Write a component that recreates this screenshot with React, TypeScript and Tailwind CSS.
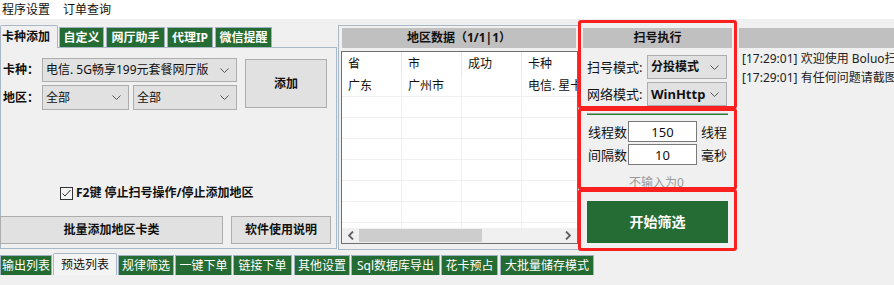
import React from "react";

function Chevron() {
  return (
    <svg width="9" height="5" viewBox="0 0 9 5" className="shrink-0">
      <polyline points="0.5,0.5 4.5,4.5 8.5,0.5" fill="none" stroke="#555" strokeWidth="1" />
    </svg>
  );
}

function Sel({ className, text, bold }: { className: string; text: string; bold?: boolean }) {
  return (
    <div
      className={
        "flex items-center justify-between bg-[#e1e1e1] border border-[#adadad] pl-[3px] pr-[7px] overflow-hidden whitespace-nowrap " +
        className
      }
    >
      <span className={bold ? "font-bold" : ""}>{text}</span>
      <Chevron />
    </div>
  );
}

const topTabs: { label: string; w: string }[] = [
  { label: "自定义", w: "w-[45px]" },
  { label: "网厅助手", w: "w-[59px]" },
  { label: "代理IP", w: "w-[46px]" },
  { label: "微信提醒", w: "w-[57px]" },
];

const bottomTabs: { label: string; cls: string; active?: boolean }[] = [
  { label: "输出列表", cls: "w-[52px]" },
  { label: "预选列表", cls: "w-[64px] ml-[1px]", active: true },
  { label: "规律筛选", cls: "w-[56px] ml-[1px]" },
  { label: "一键下单", cls: "w-[57px] ml-[1px]" },
  { label: "链接下单", cls: "w-[59px] ml-[1px]" },
  { label: "其他设置", cls: "w-[56px] ml-[2px]" },
  { label: "Sql数据库导出", cls: "w-[89px] ml-[1px]" },
  { label: "花卡预占", cls: "w-[57px] ml-[1px]" },
  { label: "大批量储存模式", cls: "w-[94px] ml-[2px]" },
];

function Row({ cells }: { cells: string[] }) {
  return (
    <div className="flex h-[21px] shrink-0 border-b border-[#f0f0f0]">
      <div className="w-[60px] shrink-0 border-r border-[#f0f0f0] pl-[6px] flex items-center">{cells[0]}</div>
      <div className="w-[60px] shrink-0 border-r border-[#f0f0f0] pl-[6px] flex items-center">{cells[1]}</div>
      <div className="w-[60px] shrink-0 border-r border-[#f0f0f0] pl-[6px] flex items-center">{cells[2]}</div>
      <div className="w-[60px] shrink-0 pl-[6px] flex items-center whitespace-nowrap overflow-hidden">{cells[3]}</div>
    </div>
  );
}

export default function App() {
  return (
    <div className="w-[894px] h-[285px] bg-[#f0f0f0] overflow-hidden relative font-['Noto_Sans','Noto_Sans_CJK_SC',sans-serif] text-[12px] leading-[16px] text-[#111]">
      {/* menu */}
      <div className="h-[19px] bg-white flex items-center pl-[2px] gap-[13px]">
        <span>程序设置</span>
        <span>订单查询</span>
      </div>

      <div className="flex h-[234px]">
        {/* left tab control */}
        <div className="w-[337px] shrink-0 flex flex-col pt-[6px]">
          <div className="flex items-end h-[22px]">
            <div className="w-[58px] h-[23px] -mb-px relative z-10 border border-b-0 border-[#a9b8c6] bg-[#f0f0f0] rounded-t-[2px] pl-[1px] flex items-center font-bold">
              卡种添加
            </div>
            <div className="flex gap-[2px] ml-[1px]">
              {topTabs.map((t) => (
                <div
                  key={t.label}
                  className={
                    "h-[20px] bg-[#256b34] border border-[#9fb0bf] border-b-0 text-white font-bold flex items-center justify-center " +
                    t.w
                  }
                >
                  {t.label}
                </div>
              ))}
            </div>
          </div>
          <div className="h-[202px] border border-[#a9b8c6] flex flex-col">
            <div className="flex mt-[10px]">
              <div className="flex flex-col gap-[3px]">
                <div className="flex items-center h-[24px]">
                  <span className="w-[41px] pl-[2px] font-bold">卡种：</span>
                  <Sel className="w-[195px] h-[24px]" text="电信. 5G畅享199元套餐网厅版" />
                </div>
                <div className="flex items-center h-[25px]">
                  <span className="w-[41px] pl-[2px] font-bold">地区：</span>
                  <Sel className="w-[87px] h-[25px]" text="全部" />
                  <Sel className="w-[104px] h-[25px] ml-[4px]" text="全部" />
                </div>
              </div>
              <div className="ml-[8px] mt-[1px] w-[82px] h-[49px] bg-[#e1e1e1] border border-[#adadad] flex items-center justify-center font-bold">
                添加
              </div>
            </div>
            <div className="flex items-center mt-[76px] h-[14px] pl-[59px]">
              <svg width="13" height="13" viewBox="0 0 13 13" className="shrink-0">
                <rect x="0.5" y="0.5" width="12" height="12" fill="#f4f4f4" stroke="#333" />
                <polyline points="2.5,6.5 5,9 10.5,3" fill="none" stroke="#333" strokeWidth="1" />
              </svg>
              <span className="ml-[3px] font-bold whitespace-nowrap">F2键 停止扫号操作/停止添加地区</span>
            </div>
            <div className="flex mt-[16px] -ml-px">
              <div className="w-[223px] h-[28px] bg-[#e1e1e1] border border-[#adadad] flex items-center justify-center font-bold">
                批量添加地区卡类
              </div>
              <div className="w-[100px] ml-[8px] h-[28px] bg-[#e1e1e1] border border-[#adadad] flex items-center justify-center font-bold">
                软件使用说明
              </div>
            </div>
          </div>
        </div>

        {/* middle group */}
        <div className="ml-[1px] mt-[6px] w-[242px] h-[225px] shrink-0 border border-[#a9b8c6] flex flex-col">
          <div className="mt-[2px] mx-[3px] h-[20px] bg-[#c0c0c0] flex items-center justify-center font-bold">
            地区数据（1/1|1）
          </div>
          <div className="mt-[3px] ml-[2px] w-[237px] h-[193px] border border-[#6e6e6e] bg-white flex flex-col overflow-hidden">
            <div className="flex h-[24px] shrink-0">
              <div className="w-[60px] shrink-0 border-r border-[#e8e8e8] pl-[6px] flex items-center">省</div>
              <div className="w-[60px] shrink-0 border-r border-[#e8e8e8] pl-[6px] flex items-center">市</div>
              <div className="w-[60px] shrink-0 border-r border-[#e8e8e8] pl-[6px] flex items-center">成功</div>
              <div className="w-[60px] shrink-0 pl-[6px] flex items-center">卡种</div>
            </div>
            <div className="flex-1 flex flex-col overflow-hidden">
              <Row cells={["广东", "广州市", "", "电信. 星卡套餐"]} />
              <Row cells={["", "", "", ""]} />
              <Row cells={["", "", "", ""]} />
              <Row cells={["", "", "", ""]} />
              <Row cells={["", "", "", ""]} />
              <Row cells={["", "", "", ""]} />
              <Row cells={["", "", "", ""]} />
              <Row cells={["", "", "", ""]} />
            </div>
            <div className="h-[15px] shrink-0 bg-[#f0f0f0] flex items-center">
              <div className="w-[17px] flex items-center justify-center">
                <svg width="6" height="9" viewBox="0 0 6 9">
                  <polyline points="5,0.5 1,4.5 5,8.5" fill="none" stroke="#606060" strokeWidth="1.8" />
                </svg>
              </div>
              <div className="w-[123px] h-[13px] bg-[#cdcdcd]" />
              <div className="flex-1 flex items-center justify-end pr-[6px]">
                <svg width="6" height="9" viewBox="0 0 6 9">
                  <polyline points="1,0.5 5,4.5 1,8.5" fill="none" stroke="#606060" strokeWidth="1.8" />
                </svg>
              </div>
            </div>
          </div>
        </div>

        {/* right control column */}
        <div className="w-[157px] shrink-0 flex flex-col">
          <div className="mt-[9px] ml-[3px] w-[149px] h-[20px] bg-[#c0c0c0] flex items-center justify-center font-bold">
            扫号执行
          </div>
          <div className="mt-[7px] h-[24px] flex items-center">
            <span className="ml-[7px] w-[60px] text-[13px] whitespace-nowrap">扫号模式:</span>
            <Sel className="w-[80px] h-[24px]" text="分投模式" bold />
          </div>
          <div className="mt-[3px] h-[24px] flex items-center">
            <span className="ml-[7px] w-[60px] text-[13px] whitespace-nowrap">网络模式:</span>
            <Sel className="w-[80px] h-[24px] text-[13px]" text="WinHttp" bold />
          </div>
          <div className="mt-[7px] ml-[7px] w-[141px] h-[2px] border-t border-[#a0a0a0] bg-[#1f8a2a]" />
          <div className="mt-[6px] h-[21px] flex items-center">
            <span className="ml-[8px] w-[40px] text-[13px] whitespace-nowrap">线程数</span>
            <div className="w-[69px] h-[21px] bg-white border border-[#7a7a7a] flex items-center justify-center text-[13px]">150</div>
            <span className="ml-[4px] text-[13px] whitespace-nowrap">线程</span>
          </div>
          <div className="mt-[2px] h-[21px] flex items-center">
            <span className="ml-[8px] w-[40px] text-[13px] whitespace-nowrap">间隔数</span>
            <div className="w-[69px] h-[21px] bg-white border border-[#7a7a7a] flex items-center justify-center text-[13px]">10</div>
            <span className="ml-[4px] text-[13px] whitespace-nowrap">毫秒</span>
          </div>
          <div className="mt-[10px] h-[16px] ml-[49px] text-[#9a9a9a] whitespace-nowrap">不输入为0</div>
          <div className="mt-[10px] ml-[7px] w-[141px] h-[42px] bg-[#256b34] text-white font-bold text-[14px] flex items-center justify-center">
            开始筛选
          </div>
        </div>

        {/* log */}
        <div className="flex-1 flex flex-col overflow-hidden">
          <div className="mt-[9px] ml-[2px] h-[20px] bg-[#c0c0c0]" />
          <div className="mt-[1px] pl-[5px] leading-[19px] whitespace-nowrap text-[#222]">
            <div>[17:29:01] 欢迎使用 Boluo扫号助手</div>
            <div>[17:29:01] 有任何问题请截图联系客服</div>
          </div>
        </div>
      </div>

      {/* bottom tabs */}
      <div className="flex items-end h-[22px]">
        {bottomTabs.map((t) =>
          t.active ? (
            <div
              key={t.label}
              className={
                "h-[22px] bg-[#f4f4f4] border border-b-0 border-[#a9b8c6] rounded-t-[2px] flex items-center justify-center " +
                t.cls
              }
            >
              {t.label}
            </div>
          ) : (
            <div
              key={t.label}
              className={
                "h-[20px] bg-[#256b34] border border-b-0 border-[#9fb0bf] text-white flex items-center justify-center whitespace-nowrap " +
                t.cls
              }
            >
              {t.label}
            </div>
          )
        )}
      </div>

      {/* red annotation boxes */}
      <div className="absolute left-[578px] top-[20px] w-[159px] h-[89px] border-[3px] border-[#fb2020] rounded-[3px] pointer-events-none" />
      <div className="absolute left-[578px] top-[108px] w-[159px] h-[82px] border-[3px] border-[#fb2020] rounded-[3px] pointer-events-none" />
      <div className="absolute left-[578px] top-[189px] w-[159px] h-[62px] border-[3px] border-[#fb2020] rounded-[3px] pointer-events-none" />
    </div>
  );
}
